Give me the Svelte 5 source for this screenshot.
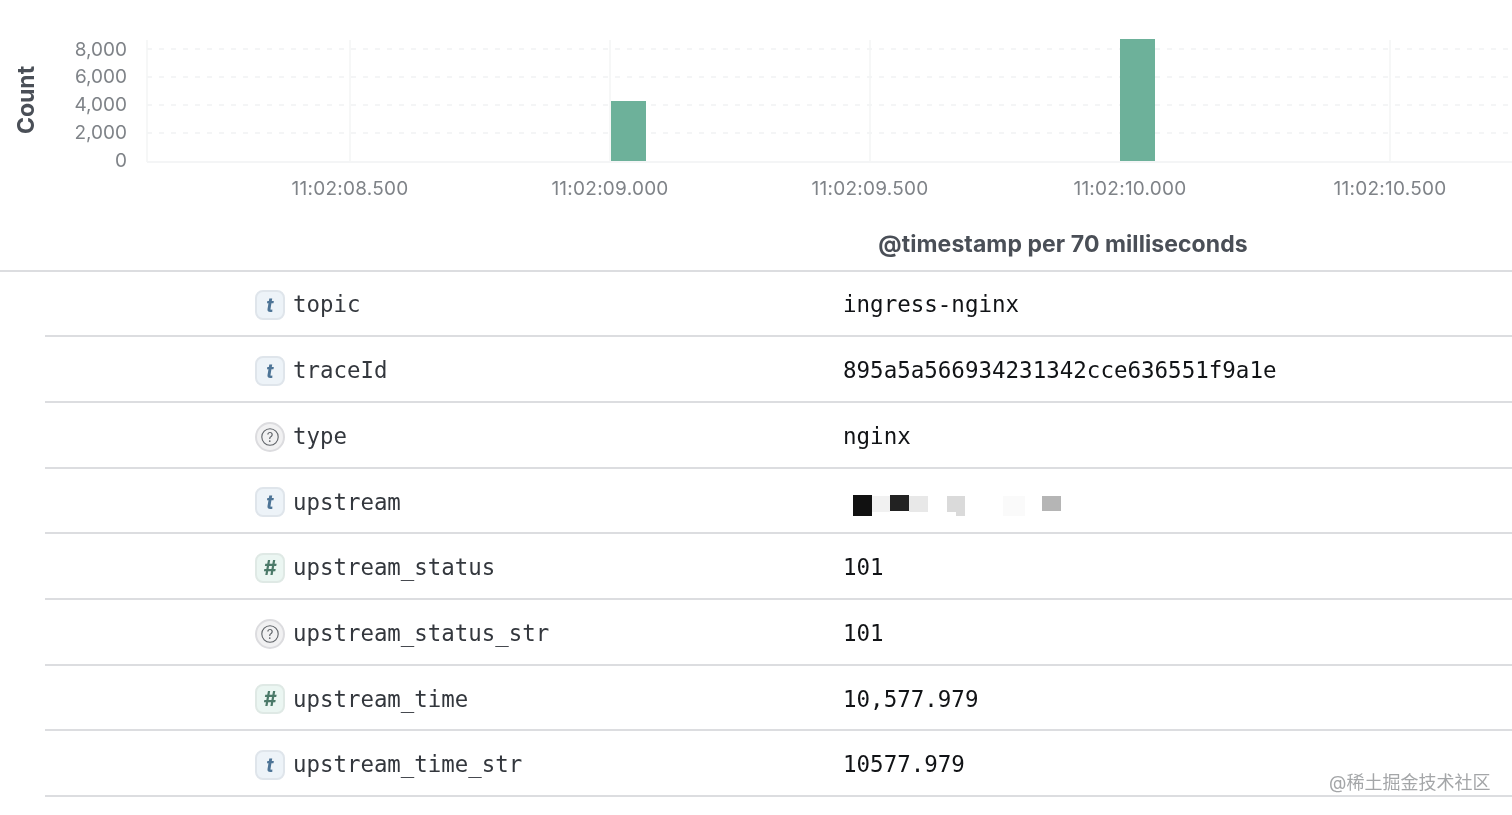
<script lang="ts">
  type Field = { kind: 'string' | 'number' | 'unknown'; name: string; value?: string };

  const fields: Field[] = [
    { kind: 'string', name: 'topic', value: 'ingress-nginx' },
    { kind: 'string', name: 'traceId', value: '895a5a566934231342cce636551f9a1e' },
    { kind: 'unknown', name: 'type', value: 'nginx' },
    { kind: 'string', name: 'upstream' },
    { kind: 'number', name: 'upstream_status', value: '101' },
    { kind: 'unknown', name: 'upstream_status_str', value: '101' },
    { kind: 'number', name: 'upstream_time', value: '10,577.979' },
    { kind: 'string', name: 'upstream_time_str', value: '10577.979' }
  ];

  const yTicks = [
    { label: '8,000', y: 49, grid: 49 },
    { label: '6,000', y: 76, grid: 77 },
    { label: '4,000', y: 104, grid: 105 },
    { label: '2,000', y: 132, grid: 133 },
    { label: '0', y: 160, grid: 0 }
  ];

  const xTicks = [
    { label: '11:02:08.500', x: 350 },
    { label: '11:02:09.000', x: 610 },
    { label: '11:02:09.500', x: 870 },
    { label: '11:02:10.000', x: 1130 },
    { label: '11:02:10.500', x: 1390 }
  ];

  const bars = [
    { x: 611, y: 101, h: 60 },
    { x: 1120, y: 39, h: 122 }
  ];
</script>

<div class="page">
  <section class="chart">
    <svg width="1512" height="270" viewBox="0 0 1512 270">
      {#each yTicks as tick}
        <text class="tick" x="127" y={tick.y + 7} text-anchor="end">{tick.label}</text>
        {#if tick.grid}
          <line class="grid" x1="147" x2="1512" y1={tick.grid} y2={tick.grid} />
        {/if}
      {/each}

      <line class="axis" x1="147" x2="147" y1="40" y2="162" />
      {#each xTicks as tick}
        <line class="axis" x1={tick.x} x2={tick.x} y1="40" y2="162" />
        <text class="tick tick--x" x={tick.x} y="195" text-anchor="middle">{tick.label}</text>
      {/each}
      <line class="baseline" x1="147" x2="1512" y1="162" y2="162" />

      {#each bars as bar}
        <rect class="bar" x={bar.x} y={bar.y} width="35" height={bar.h} />
      {/each}

      <text class="axis-title" transform="translate(34 100) rotate(-90)" text-anchor="middle">Count</text>
      <text class="axis-title axis-title--x" x="1063" y="252" text-anchor="middle">@timestamp per 70 milliseconds</text>
    </svg>
  </section>

  <div class="fields">
    {#each fields as field}
      <div class="row">
        <div class="name">
          {#if field.kind === 'unknown'}
            <span class="token token--unknown">
              <svg width="20" height="20" viewBox="0 0 20 20">
                <circle cx="10" cy="10" r="8.2" fill="none" stroke="#5f6368" stroke-width="1.1" />
                <text x="10" y="14.6" text-anchor="middle" class="q">?</text>
              </svg>
            </span>
          {:else}
            <span class="token token--{field.kind}">{field.kind === 'string' ? 't' : '#'}</span>
          {/if}
          <span class="name__text">{field.name}</span>
        </div>
        <div class="value">
          {#if field.value}
            {field.value}
          {:else}
            <svg class="redacted" width="230" height="30" viewBox="0 0 230 30">
              <rect x="10" y="8" width="19" height="21" fill="#111" />
              <rect x="29" y="9" width="18" height="16" fill="#f1f1f1" />
              <rect x="47" y="8" width="19" height="16" fill="#222" />
              <rect x="66" y="9" width="19" height="16" fill="#e8e8e8" />
              <path d="M104 9h18v20h-9v-4h-9z" fill="#dadada" />
              <rect x="160" y="9" width="22" height="20" fill="#fafafa" />
              <rect x="199" y="9" width="19" height="15" fill="#b5b5b5" />
            </svg>
          {/if}
        </div>
      </div>
    {/each}
  </div>

  <div class="watermark">@稀土掘金技术社区</div>
</div>

<style>
  :global(body) {
    margin: 0;
    background: #fff;
    overflow: hidden;
  }

  .page {
    position: relative;
    width: 1512px;
    height: 815px;
    overflow: hidden;
    filter: blur(0.45px);
  }

  .chart {
    box-sizing: border-box;
    height: 271.5px;
    border-bottom: 2px solid #dcdde0;
  }

  .chart svg {
    display: block;
  }

  .tick {
    font-family: Inter, sans-serif;
    font-size: 19px;
    fill: #7f8388;
  }

  .tick--x {
    letter-spacing: 0.25px;
  }

  .axis-title {
    font-family: Inter, sans-serif;
    font-size: 23px;
    font-weight: 700;
    fill: #4a4f57;
  }

  .axis-title--x {
    letter-spacing: 0.07px;
  }

  .grid {
    stroke: #f1f2f3;
    stroke-width: 1.5;
    stroke-dasharray: 5 7;
  }

  .axis {
    stroke: #f3f4f5;
    stroke-width: 1.5;
  }

  .baseline {
    stroke: #f4f5f6;
    stroke-width: 2;
  }

  .bar {
    fill: #6db19a;
  }

  .fields {
    margin-left: 45px;
  }

  .row {
    display: grid;
    grid-template-columns: 798px 1fr;
    align-items: center;
    box-sizing: border-box;
    height: 65.7px;
    padding-top: 2.3px;
    border-bottom: 2px solid #dcdde0;
    font-family: 'DejaVu Sans Mono', monospace;
    font-size: 22.5px;
    color: #2f3238;
  }

  .name {
    display: flex;
    align-items: center;
    gap: 8px;
    padding-left: 210px;
    color: #33373d;
  }

  .name__text {
    font-size: 22.4px;
  }

  .value {
    color: #111316;
    white-space: nowrap;
  }

  .redacted {
    display: block;
  }

  .token {
    display: flex;
    align-items: center;
    justify-content: center;
    box-sizing: border-box;
    width: 30px;
    height: 30px;
    margin-top: 1.5px;
    border-radius: 8px;
    border: 2px solid;
    font-family: Inter, sans-serif;
    font-size: 20px;
    font-weight: 700;
    font-style: italic;
  }

  .token--string {
    background: #edf3f8;
    border-color: #dfe5eb;
    color: #4d7496;
  }

  .token--number {
    background: #ebf6f2;
    border-color: #dfe9e5;
    color: #4b7a69;
  }

  .token--unknown {
    background: #f1f1f2;
    border-color: #dcdcdf;
    border-radius: 50%;
  }

  .q {
    font-family: Inter, sans-serif;
    font-size: 13px;
    font-weight: 400;
    font-style: normal;
    fill: #5f6368;
  }

  .watermark {
    position: absolute;
    left: 1329px;
    top: 771px;
    font-family: 'Inter', 'Noto Sans CJK SC', sans-serif;
    font-size: 18px;
    line-height: 24px;
    color: #a4a6a8;
    white-space: nowrap;
  }
</style>
